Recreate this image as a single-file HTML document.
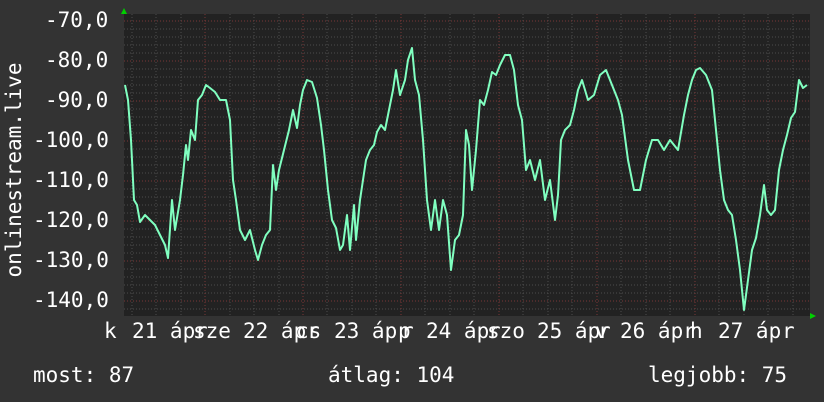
<!DOCTYPE html>
<html><head><meta charset="utf-8"><style>
html,body{margin:0;padding:0;background:#333333;}
body{width:824px;height:402px;overflow:hidden;position:relative;font-family:"DejaVu Sans Mono","Liberation Mono",monospace;color:#fff;}
.t{position:absolute;font-size:21px;white-space:pre;line-height:1;}
.a{position:absolute;font-size:21px;white-space:pre;line-height:1;top:321px;}
</style></head><body>
<svg width="824" height="402" style="position:absolute;left:0;top:0">
<rect x="124" y="14" width="686" height="302" fill="#222222"/>
<g stroke="#4c4c4c" stroke-dasharray="1,2" stroke-width="1">
<path d="M124 29h686M124 37h686M124 45h686M124 53h686M124 69h686M124 77h686M124 85h686M124 93h686M124 109h686M124 117h686M124 125h686M124 133h686M124 149h686M124 157h686M124 165h686M124 173h686M124 189h686M124 197h686M124 205h686M124 213h686M124 229h686M124 237h686M124 245h686M124 253h686M124 269h686M124 277h686M124 285h686M124 293h686M124 309h686"/>
<path d="M132 14v302M156 14v302M181 14v302M230 14v302M254 14v302M279 14v302M327 14v302M352 14v302M376 14v302M425 14v302M450 14v302M474 14v302M523 14v302M548 14v302M572 14v302M621 14v302M646 14v302M670 14v302M719 14v302M744 14v302M768 14v302M793 14v302"/>
</g>
<g stroke="#7a3535" stroke-dasharray="1,2" stroke-width="1">
<path d="M124 21h686M124 61h686M124 101h686M124 141h686M124 181h686M124 221h686M124 261h686M124 301h686"/>
<path d="M205 14v302M303 14v302M401 14v302M499 14v302M597 14v302M695 14v302"/>
</g>
<polyline fill="none" stroke="#80ffc0" stroke-width="2" stroke-linejoin="round" points="125,85 128,100 131,140 134,200 137,205 140,222 145,215 150,220 155,225 160,235 165,245 168,258 172,200 175,230 180,200 183,175 186,145 188,160 191,130 195,140 198,100 202,95 206,85 210,88 215,92 220,100 226,100 230,120 233,180 236,200 240,230 245,240 250,230 255,250 258,260 262,245 266,235 270,230 273,165 276,190 279,170 284,150 289,130 293,110 297,128 300,105 303,90 307,80 312,82 317,98 321,125 324,150 328,190 332,220 336,228 340,250 343,245 347,215 350,250 354,205 356,240 360,200 366,160 370,150 374,145 377,132 381,125 385,130 389,110 393,90 396,70 400,95 405,80 408,60 412,48 415,80 419,95 423,140 427,200 431,230 435,200 439,230 443,200 447,215 451,270 455,240 459,235 463,215 466,130 469,145 472,190 476,150 480,100 484,105 488,90 492,72 496,75 500,65 505,55 510,55 514,70 518,105 522,120 526,170 530,160 535,180 540,160 545,200 550,180 555,220 558,195 561,140 565,130 570,125 574,110 578,90 582,80 588,100 594,95 600,75 606,70 612,85 618,100 622,115 628,160 634,190 640,190 646,160 652,140 658,140 664,150 670,140 678,150 684,115 688,95 692,80 696,70 700,68 706,75 712,90 716,130 720,170 724,200 728,210 732,215 736,240 740,270 744,310 748,280 752,250 756,238 760,215 764,185 767,210 771,215 775,210 779,170 783,150 787,135 791,118 795,112 799,80 803,88 807,85"/>
<polygon points="121,14 127,14 124,8" fill="#00d000"/>
<polygon points="810,313 810,319 816,316" fill="#00d000"/>
<text x="21" y="170" transform="rotate(-90 21 170)" text-anchor="middle" fill="#fff" font-size="21" font-family="DejaVu Sans Mono, Liberation Mono, monospace">onlinestream.live</text>
</svg>
<div class="t" style="left:45px;top:10px">-70,0</div>
<div class="t" style="left:45px;top:50px">-80,0</div>
<div class="t" style="left:45px;top:90px">-90,0</div>
<div class="t" style="left:33px;top:130px">-100,0</div>
<div class="t" style="left:33px;top:170px">-110,0</div>
<div class="t" style="left:33px;top:210px">-120,0</div>
<div class="t" style="left:33px;top:250px">-130,0</div>
<div class="t" style="left:33px;top:290px">-140,0</div>
<div class="a" style="left:104px">k</div>
<div class="a" style="left:132px">21 áp</div><div class="a" style="left:193px">sze</div><div class="a" style="left:195px">r</div>
<div class="a" style="left:243px">22 áp</div><div class="a" style="left:296px">cs</div><div class="a" style="left:307px">r</div>
<div class="a" style="left:334px">23 áp</div><div class="a" style="left:398px">p</div><div class="a" style="left:401px">r</div>
<div class="a" style="left:426px">24 áp</div><div class="a" style="left:487px">szo</div><div class="a" style="left:488px">r</div>
<div class="a" style="left:537px">25 áp</div><div class="a" style="left:595px">v</div><div class="a" style="left:598px">r</div>
<div class="a" style="left:620px">26 áp</div><div class="a" style="left:690px">h</div><div class="a" style="left:683px">r</div>
<div class="a" style="left:718px">27 áp</div><div class="a" style="left:782px">r</div>
<div class="t" style="left:33px;top:365px">most: 87</div>
<div class="t" style="left:328px;top:365px">átlag: 104</div>
<div class="t" style="left:648px;top:365px">legjobb: 75</div>
</body></html>
